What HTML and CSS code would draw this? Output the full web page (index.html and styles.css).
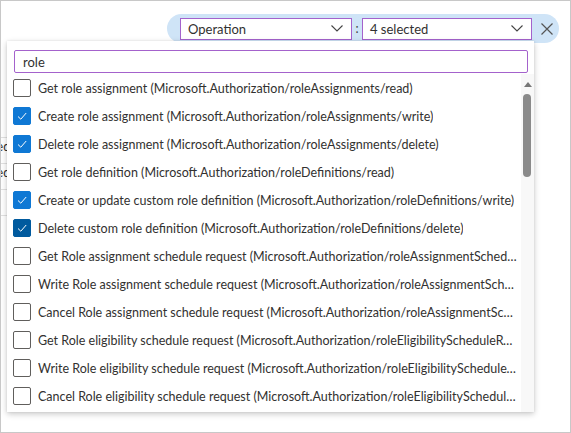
FILE: index.html
```html
<!DOCTYPE html>
<html>
<head>
<meta charset="utf-8">
<link rel="stylesheet" href="styles.css">
</head>
<body>
<div class="frame">
  <div class="toolbar">
    <div class="pill">
      <div class="select sel-op"><span>Operation</span><svg class="chev" viewBox="0 0 12 7" width="12" height="7"><polyline points="0.5,0.5 6,6 11.5,0.5" fill="none" stroke="#444" stroke-width="1.1"/></svg></div>
      <span class="colon">:</span>
      <div class="select sel-val"><span>4 selected</span><svg class="chev" viewBox="0 0 12 7" width="12" height="7"><polyline points="0.5,0.5 6,6 11.5,0.5" fill="none" stroke="#444" stroke-width="1.1"/></svg></div>
      <button class="close"><svg viewBox="0 0 12 12" width="12" height="12"><path d="M0.5 0.5 L11.5 11.5 M11.5 0.5 L0.5 11.5" stroke="#555" stroke-width="1.2" fill="none"/></svg></button>
    </div>
  </div>
  <div class="bg-table">
    <div class="bg-row"></div>
    <div class="bg-row"><span>Succeeded</span></div>
    <div class="bg-row"><span>Succeeded</span></div>
    <div class="bg-row"></div>
  </div>

  <div class="panel">
    <div class="search"><span>role</span></div>
    <div class="listwrap">
      <ul class="list">
        <li><span class="cb"></span><span class="lbl">Get role assignment (Microsoft.Authorization/roleAssignments/read)</span></li>
        <li><span class="cb on"><svg viewBox="0 0 18 18"><polyline points="5,9.5 7.8,12.2 13.2,6" fill="none" stroke="#fff" stroke-width="1"/></svg></span><span class="lbl">Create role assignment (Microsoft.Authorization/roleAssignments/write)</span></li>
        <li><span class="cb on"><svg viewBox="0 0 18 18"><polyline points="5,9.5 7.8,12.2 13.2,6" fill="none" stroke="#fff" stroke-width="1"/></svg></span><span class="lbl">Delete role assignment (Microsoft.Authorization/roleAssignments/delete)</span></li>
        <li><span class="cb"></span><span class="lbl">Get role definition (Microsoft.Authorization/roleDefinitions/read)</span></li>
        <li><span class="cb on"><svg viewBox="0 0 18 18"><polyline points="5,9.5 7.8,12.2 13.2,6" fill="none" stroke="#fff" stroke-width="1"/></svg></span><span class="lbl">Create or update custom role definition (Microsoft.Authorization/roleDefinitions/write)</span></li>
        <li><span class="cb on dark"><svg viewBox="0 0 18 18"><polyline points="5,9.5 7.8,12.2 13.2,6" fill="none" stroke="#fff" stroke-width="1"/></svg></span><span class="lbl">Delete custom role definition (Microsoft.Authorization/roleDefinitions/delete)</span></li>
        <li><span class="cb"></span><span class="lbl">Get Role assignment schedule request (Microsoft.Authorization/roleAssignmentScheduleRequests/read)</span></li>
        <li><span class="cb"></span><span class="lbl">Write Role assignment schedule request (Microsoft.Authorization/roleAssignmentScheduleRequests/write)</span></li>
        <li><span class="cb"></span><span class="lbl">Cancel Role assignment schedule request (Microsoft.Authorization/roleAssignmentScheduleRequests/cancel/action)</span></li>
        <li><span class="cb"></span><span class="lbl">Get Role eligibility schedule request (Microsoft.Authorization/roleEligibilityScheduleRequests/read)</span></li>
        <li><span class="cb"></span><span class="lbl">Write Role eligibility schedule request (Microsoft.Authorization/roleEligibilityScheduleRequests/write)</span></li>
        <li><span class="cb"></span><span class="lbl">Cancel Role eligibility schedule request (Microsoft.Authorization/roleEligibilityScheduleRequests/cancel/action)</span></li>
      </ul>
      <div class="scrollbar">
        <span class="arrow"></span>
        <span class="thumb"></span>
      </div>
    </div>
  </div>
</div>
</body>
</html>
```
FILE: styles.css
```css
* { box-sizing: border-box; }
html, body { margin: 0; padding: 0; background: #fff; }
body {
  font-family: "Lato", "Open Sans", sans-serif;
  font-size: 12.5px;
  color: #323130;
}
.frame {
  position: relative;
  width: 571px;
  height: 433px;
  border: 1px solid #c8c8c8;
  overflow: hidden;
}
.toolbar {
  display: flex;
  justify-content: flex-end;
  padding: 13px 11px 0 0;
}
.pill {
  display: flex;
  align-items: center;
  height: 29px;
  padding: 0 0 0 13px;
  border-radius: 15px;
  background: #cfe4f7;
}
.select {
  display: flex;
  align-items: center;
  justify-content: space-between;
  height: 22px;
  border: 1px solid #a462cc;
  background: #fff;
  padding: 0 8px 0 7px;
  font-size: 13px;
}
.sel-op { width: 172px; }
.sel-val { width: 170px; }
.colon { width: 10px; text-align: center; color: #444; }
.chev { display: block; }
.close {
  width: 24px;
  height: 24px;
  border: 0;
  background: transparent;
  padding: 0;
  margin-left: 3px;
  display: flex;
  align-items: center;
  justify-content: center;
}
.close svg { display: block; }

.bg-table { margin-top: 69px; width: 300px; }
.bg-row {
  height: 26px;
  border-bottom: 1px solid #e1e1e1;
  display: flex;
  align-items: flex-start;
  padding-top: 1px;
  overflow: hidden;
}
.bg-row span { margin-left: -50px; white-space: nowrap; }

.panel {
  position: absolute;
  left: 6px;
  top: 40px;
  width: 527px;
  height: 371px;
  background: #fff;
  box-shadow: 0 2px 6px rgba(0,0,0,0.22), 0 0 2px rgba(0,0,0,0.08);
  padding: 9px 0 0 0;
}
.search {
  margin-left: 7px;
  width: 514px;
  height: 23px;
  border: 1px solid #a462cc;
  border-radius: 2px;
  display: flex;
  align-items: center;
  padding-left: 8px;
  font-size: 13px;
}
.listwrap {
  display: flex;
  margin-top: 1px;
  height: 338px;
}
.list {
  list-style: none;
  margin: 0;
  padding: 0;
  flex: 1;
  min-width: 0;
}
.list li {
  display: flex;
  align-items: center;
  height: 28px;
  padding-left: 6px;
  padding-right: 2px;
}
.cb {
  flex: none;
  width: 18px;
  height: 18px;
  border: 1px solid #605e5c;
  border-radius: 2px;
  margin-right: 7px;
  display: flex;
}
.cb svg { width: 18px; height: 18px; margin: -1px; display: block; }
.cb.on { background: #0f78d4; border-color: #0f78d4; }
.cb.on.dark { background: #005a9e; border-color: #005a9e; }
.lbl {
  white-space: nowrap;
  overflow: hidden;
  text-overflow: ellipsis;
  min-width: 0;
}
.scrollbar {
  flex: none;
  width: 13px;
  background: #f8f8f8;
  position: relative;
}
.arrow {
  position: absolute;
  left: 3px;
  top: 8px;
  width: 0;
  height: 0;
  border-left: 4px solid transparent;
  border-right: 4px solid transparent;
  border-bottom: 5px solid #777;
}
.thumb {
  position: absolute;
  left: 2px;
  top: 20px;
  width: 8px;
  height: 83px;
  border-radius: 4px;
  background: #8a8a8a;
}
```
